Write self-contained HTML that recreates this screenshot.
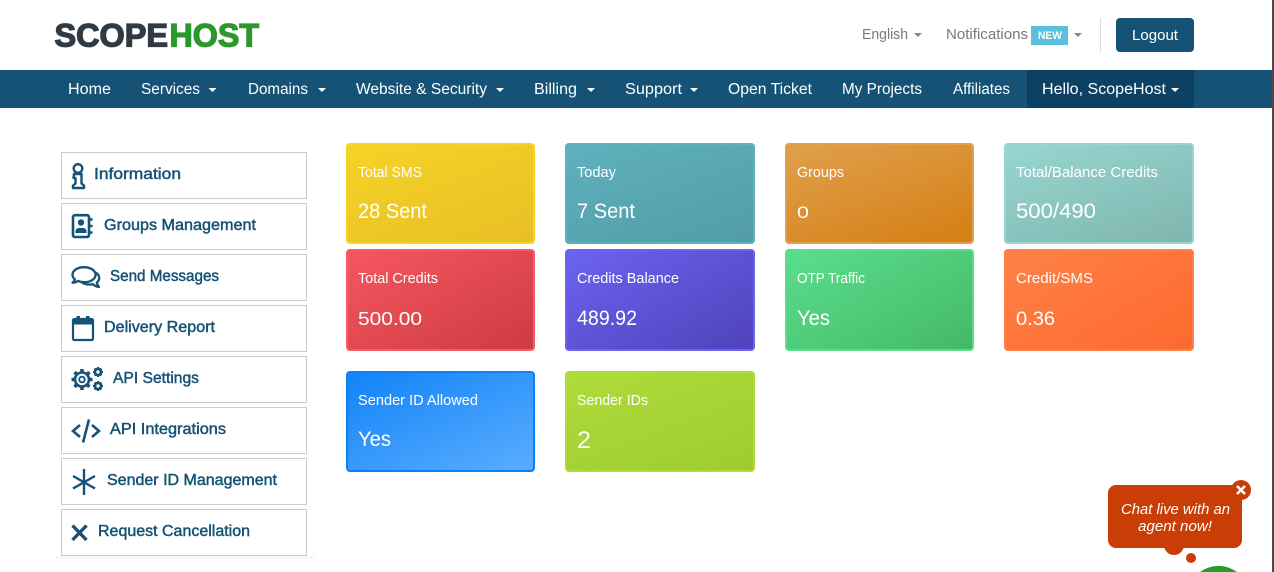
<!DOCTYPE html>
<html lang="en">
<head>
<meta charset="utf-8">
<title>ScopeHost</title>
<style>
html,body{margin:0;padding:0;width:1274px;height:572px;overflow:hidden;background:#fff}
#w{position:relative;width:1274px;height:572px;overflow:hidden;background:#fff}
.a{position:absolute}
.card{position:absolute;box-sizing:border-box;border-radius:4px;border:2px solid}
.side{position:absolute;left:61px;width:246px;height:47px;box-sizing:border-box;border:1px solid #cbcbcb;background:#fff}
svg{position:absolute;left:0;top:0;display:block}
svg text{font-family:"Liberation Sans",sans-serif}
.n{font-size:15.5px;fill:#fff}
.l{font-size:14.5px;fill:#fff}
.v{font-size:21px;fill:#fff}
.s{font-size:15.5px;fill:#155276;stroke:#155276;stroke-width:.45px}
.t{font-size:14.5px;fill:#77797c}
</style>
</head>
<body>
<div id="w">
<div class="a" style="left:0;top:70px;width:1272px;height:38px;background:#155276"></div>
<div class="a" style="left:1027px;top:70px;width:167px;height:38px;background:#0c4163"></div>
<div class="a" style="left:1100px;top:18px;width:1px;height:34px;background:#dcdcdc"></div>
<div class="a" style="left:1116px;top:18px;width:78px;height:34px;background:#155276;border-radius:4px"></div>
<div class="a" style="left:1031px;top:26px;width:37px;height:19px;background:#5bc0de"></div>
<div class="a" style="left:1272px;top:0;width:2px;height:572px;background:#4a4a4a"></div>

<div class="a" style="left:54px;top:556px;width:261px;height:3px;background:#f6f6f6;border-radius:0 0 4px 4px"></div>
<div class="side" style="top:152px"></div>
<div class="side" style="top:203px"></div>
<div class="side" style="top:254px"></div>
<div class="side" style="top:305px"></div>
<div class="side" style="top:356px"></div>
<div class="side" style="top:407px"></div>
<div class="side" style="top:458px"></div>
<div class="side" style="top:509px"></div>

<div class="card" style="left:346px;top:143px;width:189px;height:101px;border-color:#f5d327;background:linear-gradient(160deg,#f5d327,#e8bf25)"></div>
<div class="card" style="left:565px;top:143px;width:190px;height:101px;border-color:#5fb1bd;background:linear-gradient(160deg,#5fb1bd,#529ca7)"></div>
<div class="card" style="left:785px;top:143px;width:189px;height:101px;border-color:#e0a04c;background:linear-gradient(160deg,#e0a04c,#d57e14)"></div>
<div class="card" style="left:1004px;top:143px;width:190px;height:101px;border-color:#98d6d1;background:linear-gradient(160deg,#98d6d1,#7fb5ae)"></div>
<div class="card" style="left:346px;top:249px;width:189px;height:102px;border-color:#fb5963;background:linear-gradient(150deg,#f6565f,#cc3c42)"></div>
<div class="card" style="left:565px;top:249px;width:190px;height:102px;border-color:#6c63f0;background:linear-gradient(150deg,#6c63f0,#4f42ba)"></div>
<div class="card" style="left:785px;top:249px;width:189px;height:102px;border-color:#5ade8c;background:linear-gradient(150deg,#5ade8c,#44b968)"></div>
<div class="card" style="left:1004px;top:249px;width:190px;height:102px;border-color:#ff8048;background:linear-gradient(150deg,#ff8146,#fd692e)"></div>
<div class="card" style="left:346px;top:371px;width:189px;height:101px;border-color:#0a84f5;background:linear-gradient(155deg,#1283f7,#59adff)"></div>
<div class="card" style="left:565px;top:371px;width:190px;height:101px;border-color:#aedc3a;background:linear-gradient(160deg,#aedc3a,#9fcb30)"></div>

<div class="a" style="left:1164px;top:535px;width:20px;height:20px;border-radius:50%;background:#c93d07"></div>
<div class="a" style="left:1186px;top:553px;width:10px;height:10px;border-radius:50%;background:#c93d07"></div>
<div class="a" style="left:1108px;top:485px;width:134px;height:63px;border-radius:8px;background:#c93d07"></div>
<div class="a" style="left:1231px;top:480px;width:20px;height:20px;border-radius:50%;background:#c93d07"></div>

<svg width="1274" height="572" viewBox="0 0 1274 572" xmlns="http://www.w3.org/2000/svg">
<path d="M1200 572A31 31 0 0 1 1237 572Z" fill="#2a9a2a"/>
<text x="54.500" y="46.500" font-size="32" font-weight="700" fill="#2f3a44" stroke="#2f3a44" stroke-width="1.300" textLength="113.500" lengthAdjust="spacingAndGlyphs">SCOPE</text>
<text x="169.500" y="46.500" font-size="32" font-weight="700" fill="#2b982b" stroke="#2b982b" stroke-width="1.300" textLength="89.500" lengthAdjust="spacingAndGlyphs">HOST</text>

<text class="t" x="862" y="39" textLength="46" lengthAdjust="spacingAndGlyphs">English</text>
<path d="M914 33h8l-4 4z" fill="#888"/>
<text class="t" x="946" y="39" textLength="82" lengthAdjust="spacingAndGlyphs">Notifications</text>
<text x="1038" y="39" font-size="11" font-weight="700" fill="#fff" textLength="24" lengthAdjust="spacingAndGlyphs">NEW</text>
<path d="M1074 33h8l-4 4z" fill="#888"/>
<text x="1132" y="40" font-size="14.5" fill="#fff" textLength="46" lengthAdjust="spacingAndGlyphs">Logout</text>

<text class="n" x="68" y="94" textLength="43" lengthAdjust="spacingAndGlyphs">Home</text>
<text class="n" x="141" y="94" textLength="59" lengthAdjust="spacingAndGlyphs">Services</text>
<path d="M208.500 88h8l-4 4z" fill="#fff"/>
<text class="n" x="248" y="94" textLength="60" lengthAdjust="spacingAndGlyphs">Domains</text>
<path d="M318 88h8l-4 4z" fill="#fff"/>
<text class="n" x="356" y="94" textLength="131" lengthAdjust="spacingAndGlyphs">Website &amp; Security</text>
<path d="M496 88h8l-4 4z" fill="#fff"/>
<text class="n" x="534" y="94" textLength="43" lengthAdjust="spacingAndGlyphs">Billing</text>
<path d="M587 88h8l-4 4z" fill="#fff"/>
<text class="n" x="625" y="94" textLength="57" lengthAdjust="spacingAndGlyphs">Support</text>
<path d="M690 88h8l-4 4z" fill="#fff"/>
<text class="n" x="728" y="94" textLength="84" lengthAdjust="spacingAndGlyphs">Open Ticket</text>
<text class="n" x="842" y="94" textLength="80" lengthAdjust="spacingAndGlyphs">My Projects</text>
<text class="n" x="953" y="94" textLength="57" lengthAdjust="spacingAndGlyphs">Affiliates</text>
<text class="n" x="1042" y="94" textLength="124" lengthAdjust="spacingAndGlyphs">Hello, ScopeHost</text>
<path d="M1171 88h8l-4 4z" fill="#fff"/>

<text class="s" x="94" y="179" textLength="87" lengthAdjust="spacingAndGlyphs">Information</text>
<text class="s" x="104" y="230" textLength="152" lengthAdjust="spacingAndGlyphs">Groups Management</text>
<text class="s" x="110" y="281" textLength="109" lengthAdjust="spacingAndGlyphs">Send Messages</text>
<text class="s" x="104" y="332" textLength="111" lengthAdjust="spacingAndGlyphs">Delivery Report</text>
<text class="s" x="113" y="383" textLength="86" lengthAdjust="spacingAndGlyphs">API Settings</text>
<text class="s" x="110" y="434" textLength="116" lengthAdjust="spacingAndGlyphs">API Integrations</text>
<text class="s" x="107" y="485" textLength="170" lengthAdjust="spacingAndGlyphs">Sender ID Management</text>
<text class="s" x="98" y="536" textLength="152" lengthAdjust="spacingAndGlyphs">Request Cancellation</text>

<!-- info -->
<circle cx="78" cy="168.500" r="4.300" fill="none" stroke="#155276" stroke-width="2.400"/>
<path d="M74 174h7.500v9.500l2.500 2v2.500H73v-2.500l2.500-2v-5.500H73.500z" fill="none" stroke="#155276" stroke-width="2.400" stroke-linejoin="round"/>
<!-- address book -->
<rect x="73" y="215.200" width="16" height="21.800" rx="2" fill="none" stroke="#155276" stroke-width="2.600"/>
<path d="M90 219.500h2.600M90 226h2.600M90 232.500h2.600" stroke="#155276" stroke-width="2.400"/>
<circle cx="81" cy="222.500" r="3.200" fill="#155276"/>
<path d="M75.500 233v-1.500c0-2.200 1.800-3.500 3.500-3.500h4c1.800 0 3.500 1.300 3.500 3.500V233z" fill="#155276"/>
<!-- comments -->
<path d="M84 267.200c-6.500 0-11.500 3.300-11.500 7.500 0 1.800.9 3.400 2.400 4.700-.4 1.400-1.300 2.400-2.400 3.300 2.200 0 4.200-.8 5.600-1.800 1.900.9 4 1.300 6 1.300 6.500 0 11.500-3.300 11.500-7.500s-5.100-7.500-11.600-7.500z" fill="none" stroke="#155276" stroke-width="2.300" stroke-linejoin="round"/>
<path d="M95.500 272.500c2.300 1.300 3.700 3.300 3.700 5.500 0 1.800-.9 3.300-2.400 4.600.3 1.700.9 3 2.200 4.400-2.300-.3-4.700-1.500-6.300-2.900-1.100.3-2.300.4-3.500.4-2.900 0-5.500-.8-7.500-2.200" fill="none" stroke="#155276" stroke-width="2.300" stroke-linejoin="round"/>
<!-- calendar -->
<rect x="73" y="319" width="20" height="21" rx="1.500" fill="none" stroke="#155276" stroke-width="2.200"/>
<rect x="73" y="318.500" width="20" height="6" fill="#155276"/>
<rect x="76.500" y="316" width="3.500" height="4" fill="#155276"/>
<rect x="86" y="316" width="3.500" height="4" fill="#155276"/>
<!-- gears -->
<circle cx="82" cy="379.500" r="7" fill="none" stroke="#155276" stroke-width="2.600"/>
<circle cx="82" cy="379.500" r="2.800" fill="none" stroke="#155276" stroke-width="1.800"/>
<path d="M82 369v3M82 387v3M71.500 379.500h3M89.500 379.500h3M74.600 372.100l2.100 2.100M87.300 384.800l2.100 2.100M74.600 386.900l2.100-2.100M87.300 374.200l2.100-2.100" stroke="#155276" stroke-width="3.600"/>
<circle cx="98" cy="372" r="3" fill="none" stroke="#155276" stroke-width="2.600"/>
<path d="M98 367v2M98 375v2M93 372h2M101 372h2M94.500 368.500l1.400 1.400M100.100 374.100l1.400 1.400M94.500 375.500l1.400-1.400M100.100 369.900l1.400-1.400" stroke="#155276" stroke-width="2.200"/>
<circle cx="98" cy="386" r="3" fill="none" stroke="#155276" stroke-width="2.600"/>
<path d="M98 381v2M98 389v2M93 386h2M101 386h2M94.500 382.500l1.400 1.400M100.100 388.100l1.400 1.400M94.500 389.500l1.400-1.400M100.100 383.900l1.400-1.400" stroke="#155276" stroke-width="2.200"/>
<!-- code -->
<path d="M80 425l-7 6 7 6M92 425l7 6-7 6M89 419.500l-6 23" fill="none" stroke="#155276" stroke-width="2.600"/>
<!-- asterisk -->
<path d="M84 469v26M73 476l22 12.500M95 476l-22 12.500" stroke="#155276" stroke-width="2.400"/>
<!-- times -->
<path d="M72.500 525.500l14 14.500M86.500 525.500l-14 14.500" stroke="#155276" stroke-width="3.400"/>

<text class="l" x="358" y="177" textLength="64" lengthAdjust="spacingAndGlyphs">Total SMS</text>
<text class="v" x="358" y="218" textLength="69" lengthAdjust="spacingAndGlyphs">28 Sent</text>
<text class="l" x="577" y="177" textLength="39" lengthAdjust="spacingAndGlyphs">Today</text>
<text class="v" x="577" y="218" textLength="58" lengthAdjust="spacingAndGlyphs">7 Sent</text>
<text class="l" x="797" y="177" textLength="47" lengthAdjust="spacingAndGlyphs">Groups</text>
<text class="v" x="797" y="218" style="font-size:17px" textLength="12" lengthAdjust="spacingAndGlyphs">0</text>
<text class="l" x="1016" y="177" textLength="142" lengthAdjust="spacingAndGlyphs">Total/Balance Credits</text>
<text class="v" x="1016" y="218" textLength="80" lengthAdjust="spacingAndGlyphs">500/490</text>

<text class="l" x="358" y="283" textLength="80" lengthAdjust="spacingAndGlyphs">Total Credits</text>
<text class="v" x="358" y="325" style="font-size:18px" textLength="64" lengthAdjust="spacingAndGlyphs">500.00</text>
<text class="l" x="577" y="283" textLength="102" lengthAdjust="spacingAndGlyphs">Credits Balance</text>
<text class="v" x="577" y="325" textLength="60" lengthAdjust="spacingAndGlyphs">489.92</text>
<text class="l" x="797" y="283" textLength="68" lengthAdjust="spacingAndGlyphs">OTP Traffic</text>
<text class="v" x="797" y="325" textLength="33" lengthAdjust="spacingAndGlyphs">Yes</text>
<text class="l" x="1016" y="283" textLength="77" lengthAdjust="spacingAndGlyphs">Credit/SMS</text>
<text class="v" x="1016" y="325" style="font-size:19px" textLength="39" lengthAdjust="spacingAndGlyphs">0.36</text>

<text class="l" x="358" y="405" textLength="120" lengthAdjust="spacingAndGlyphs">Sender ID Allowed</text>
<text class="v" x="358" y="446" textLength="33" lengthAdjust="spacingAndGlyphs">Yes</text>
<text class="l" x="577" y="405" textLength="71" lengthAdjust="spacingAndGlyphs">Sender IDs</text>
<text class="v" x="577" y="448" style="font-size:24px" textLength="14" lengthAdjust="spacingAndGlyphs">2</text>

<text x="1121" y="514" font-size="14.5" font-style="italic" fill="#fff" textLength="109" lengthAdjust="spacingAndGlyphs">Chat live with an</text>
<text x="1138" y="531" font-size="14.5" font-style="italic" fill="#fff" textLength="74" lengthAdjust="spacingAndGlyphs">agent now!</text>
<path d="M1237 486l8 8M1245 486l-8 8" stroke="#fff" stroke-width="2.600"/>
</svg>
</div>
</body>
</html>
